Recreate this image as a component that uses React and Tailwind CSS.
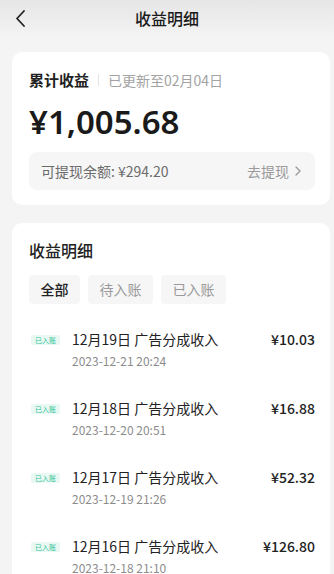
import React from "react";

const font = { fontFamily: '"Noto Sans CJK SC", "Noto Sans", sans-serif' };

const rows = [
  ["12月19日 广告分成收入", "2023-12-21 20:24", "¥10.03"],
  ["12月18日 广告分成收入", "2023-12-20 20:51", "¥16.88"],
  ["12月17日 广告分成收入", "2023-12-19 21:26", "¥52.32"],
  ["12月16日 广告分成收入", "2023-12-18 21:10", "¥126.80"],
];

export default function App() {
  return (
    <div className="w-[334px] h-[574px] overflow-hidden bg-[#f4f4f4]" style={font}>
      <div className="relative h-[38px] flex items-center justify-center bg-gradient-to-b from-[#e6e6e6] to-[#f4f4f4]">
        <svg className="absolute left-[14px] top-[9px]" width="12" height="19" viewBox="0 0 12 19" fill="none">
          <path d="M10 2 L3 9.5 L10 17" stroke="#222" strokeWidth="1.8" strokeLinecap="round" strokeLinejoin="round" />
        </svg>
        <span className="text-[16px] font-medium text-[#1a1a1a] leading-[24px] mt-[-2px]">收益明细</span>
      </div>

      <div className="ml-3 mr-1 mt-[14px] bg-white rounded-[10px] pl-[17px] pr-[15px] pt-[18px] pb-[15px]">
        <div className="flex items-center h-[20px]">
          <span className="text-[15px] font-bold text-[#222]">累计收益</span>
          <span className="mx-[9px] w-px h-[12px] bg-[#e2e2e2]" />
          <span className="text-[14px] text-[#a3a3a3]">已更新至02月04日</span>
        </div>
        <div className="mt-[14px] h-[36px] leading-[36px] text-[33px] font-semibold text-[#1a1a1a]" style={{ fontFamily: '"Noto Sans", "Noto Sans CJK SC", sans-serif' }}>
          ¥1,005.68
        </div>
        <div className="mt-[12px] h-[38px] rounded-[8px] bg-[#f6f6f6] flex items-center justify-between pl-[12px] pr-[14px]">
          <span className="text-[14px] text-[#6b6b6b]">可提现余额: ¥294.20</span>
          <span className="flex items-center text-[14px] text-[#9a9a9a]">
            去提现
            <svg className="ml-[6px]" width="6" height="10" viewBox="0 0 6 10" fill="none">
              <path d="M1 1 L5 5 L1 9" stroke="#9a9a9a" strokeWidth="1.3" strokeLinecap="round" strokeLinejoin="round" />
            </svg>
          </span>
        </div>
      </div>

      <div className="ml-3 mr-1 mt-[18px] bg-white rounded-[10px] pl-[17px] pr-[15px] pt-[15px] h-[400px]">
        <div className="text-[16px] font-medium text-[#222] leading-[24px]">收益明细</div>
        <div className="mt-[13px] flex gap-[8px]">
          <span className="w-[51px] h-[29px] rounded-[4px] bg-[#f6f6f6] flex items-center justify-center text-[14px] font-medium text-[#222]">全部</span>
          <span className="w-[65px] h-[29px] rounded-[4px] bg-[#f6f6f6] flex items-center justify-center text-[14px] text-[#9a9a9a]">待入账</span>
          <span className="w-[65px] h-[29px] rounded-[4px] bg-[#f6f6f6] flex items-center justify-center text-[14px] text-[#9a9a9a]">已入账</span>
        </div>
        <div className="mt-[25px] flex flex-col">
          {rows.map(([t, d, a]) => (
            <div key={t} className="h-[69px] flex">
              <div className="w-[43px] pt-[6px] flex items-start">
                <span className="flex items-center justify-center ml-[2px] w-[29px] h-[10px] bg-[#e9f8f2] rounded-[2px] text-[7px] leading-[10px] text-[#2fc49a]">已入账</span>
              </div>
              <div className="flex-1 flex flex-col">
                <span className="text-[14px] leading-[20px] text-[#222]">{t}</span>
                <span className="mt-[4px] text-[12px] leading-[16px] text-[#8c8c8c]">{d}</span>
              </div>
              <span className="text-[14px] leading-[20px] font-medium text-[#222]">{a}</span>
            </div>
          ))}
        </div>
      </div>
    </div>
  );
}
